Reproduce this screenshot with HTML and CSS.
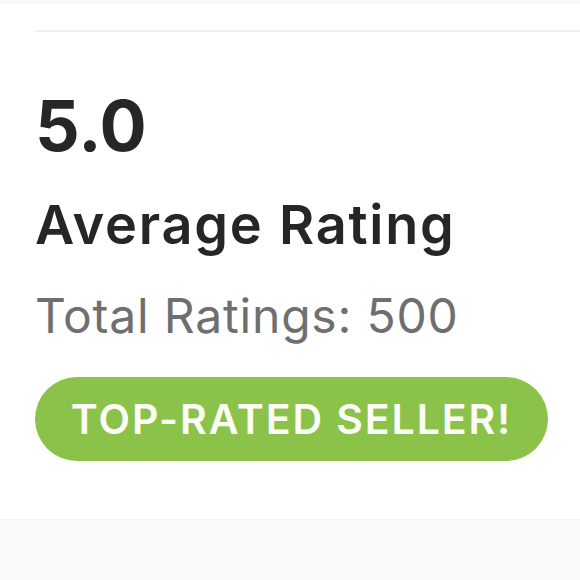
FILE: index.html
```html
<!DOCTYPE html>
<html lang="en">
<head>
<meta charset="utf-8">
<link rel="stylesheet" href="styles.css">
</head>
<body>
<div class="page">
  <div class="topstrip"></div>
  <section class="card">
    <div class="divider"></div>
    <div class="score">5.0</div>
    <div class="label">Average Rating</div>
    <div class="total">Total Ratings: 500</div>
    <div class="badge">TOP-RATED SELLER!</div>
  </section>
  <div class="footer"></div>
</div>
</body>
</html>
```
FILE: styles.css
```css
html, body {
  margin: 0;
  padding: 0;
  background: #ffffff;
}
body {
  font-family: Inter, "Noto Sans", sans-serif;
  width: 580px;
  height: 580px;
  overflow: hidden;
}
.page {
  display: flex;
  flex-direction: column;
  height: 580px;
}
.topstrip {
  height: 4px;
  background: #f9f9f9;
}
.card {
  display: flex;
  flex-direction: column;
  align-items: flex-start;
  padding-left: 35px;
  height: 515px;
  background: #ffffff;
}
.divider {
  align-self: stretch;
  height: 2px;
  margin-top: 26px;
  background: #f0f0ee;
}
.score {
  margin-top: 52px;
  font-size: 70px;
  font-weight: 700;
  line-height: 84px;
  color: #262626;
  letter-spacing: 0;
}
.label {
  margin-top: 25px;
  font-size: 54px;
  font-weight: 600;
  line-height: 64px;
  color: #262626;
  letter-spacing: 1.8px;
}
.total {
  margin-top: 30px;
  font-size: 48px;
  font-weight: 400;
  line-height: 58px;
  color: #6f6f6f;
  letter-spacing: 0.8px;
}
.badge {
  margin-top: 32px;
  width: 513px;
  height: 84px;
  border-radius: 42px;
  background: #8bc34a;
  color: #fbfdf6;
  font-size: 41px;
  font-weight: 600;
  display: flex;
  align-items: center;
  justify-content: center;
  letter-spacing: 1.9px;
}
.footer {
  flex: 1;
  background: #fafafa;
  border-top: 1px solid #f3f3f3;
}
```
